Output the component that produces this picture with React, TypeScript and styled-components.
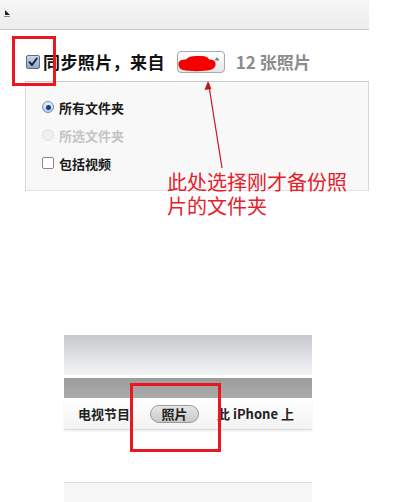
import React from "react";
import styled, { createGlobalStyle } from "styled-components";

const Global = createGlobalStyle`
  html, body { margin: 0; padding: 0; background: #ffffff; }
  body { font-family: "Noto Sans CJK SC", "Liberation Sans", sans-serif; }
  * { box-sizing: border-box; }
`;

const Page = styled.div`
  position: relative;
  width: 400px;
  height: 502px;
  overflow: hidden;
  background: #ffffff;
`;

const TopBar = styled.div`
  width: 369px;
  height: 30px;
  background: linear-gradient(#f6f6f6, #ececec);
  border-bottom: 1px solid #c9c9c9;
  display: flex;
  align-items: flex-start;
  padding: 9px 0 0 4px;
`;

const HeaderRow = styled.div`
  margin-top: 21px;
  height: 22px;
  display: flex;
  align-items: center;
  padding-left: 26px;
`;

const CheckedBox = styled.span`
  width: 14px;
  height: 14px;
  border: 1px solid #5d6f86;
  border-radius: 2px;
  background: linear-gradient(#c9d8ea, #8fa8c6);
  display: inline-flex;
  align-items: center;
  justify-content: center;
  margin-right: 3px;
`;

const Title = styled.span`
  font-size: 17px;
  font-weight: 700;
  color: #111;
  letter-spacing: 0.4px;
  line-height: 22px;
`;

const Popup = styled.span`
  position: relative;
  margin-left: 12px;
  width: 48px;
  height: 22px;
  border: 1px solid #a9a9a9;
  border-radius: 4px;
  background: linear-gradient(#ffffff, #e6e6e6);
  display: inline-flex;
  align-items: center;
`;

const PopupArt = styled.svg`
  position: absolute;
  left: -1px;
  top: -1px;
`;

const Count = styled.span`
  margin-left: 11px;
  font-size: 17px;
  font-weight: 700;
  color: #8c8c8c;
  line-height: 22px;
`;

const Panel = styled.div`
  margin: 8px 0 0 25px;
  width: 344px;
  height: 110px;
  background: #f8f8f8;
  border: 1px solid #d6d6d6;
  border-top-color: #c8c8c8;
  border-bottom-color: #e2e2e2;
  padding: 11px 0 0 16px;
  display: flex;
  flex-direction: column;
`;

const OptionRow = styled.div<{ $disabled?: boolean }>`
  height: 28px;
  display: flex;
  align-items: center;
  gap: 5px;
  font-size: 13px;
  font-weight: 700;
  color: ${(p) => (p.$disabled ? "#c4c4c4" : "#1a1a1a")};
`;

const Radio = styled.span<{ $on?: boolean; $disabled?: boolean }>`
  width: 12px;
  height: 12px;
  border-radius: 50%;
  border: 1px solid ${(p) => (p.$disabled ? "#e2e2e2" : "#6f8fb8")};
  background: ${(p) =>
    p.$disabled ? "#f0f0f0" : "linear-gradient(#e8f0fa, #b8cce6)"};
  display: inline-flex;
  align-items: center;
  justify-content: center;
  &::after {
    content: "";
    display: ${(p) => (p.$on ? "block" : "none")};
    width: 5px;
    height: 5px;
    border-radius: 50%;
    background: #1f3f73;
  }
`;

const EmptyBox = styled.span`
  width: 12px;
  height: 12px;
  border: 1px solid #8a8a8a;
  border-radius: 2px;
  background: #ffffff;
`;

const Lower = styled.div`
  margin: 144px 0 0 64px;
  width: 248px;
  display: flex;
  flex-direction: column;
`;

const Toolbar = styled.div`
  height: 40px;
  background: linear-gradient(#c6c8cc, #dadcdf 45%, #eceef1 85%, #f2f3f5);
`;

const Gap = styled.div<{ $h: number; $bg: string }>`
  height: ${(p) => p.$h}px;
  background: ${(p) => p.$bg};
`;

const Band = styled.div`
  height: 20px;
  background: linear-gradient(#9c9c9c, #ababab);
`;

const TabBar = styled.div`
  height: 32px;
  background: linear-gradient(#ffffff, #f3f3f3);
  border-bottom: 1px solid #dcdcdc;
  box-shadow: 0 1px 2px rgba(0, 0, 0, 0.08);
  display: flex;
  align-items: center;
  padding-left: 14px;
  font-size: 13px;
  font-weight: 700;
  color: #222;
`;

const Tab = styled.span`
  line-height: 18px;
`;

const Pill = styled.span`
  margin-left: 20px;
  width: 49px;
  height: 18px;
  border-radius: 9px;
  border: 1px solid #9a9a9a;
  background: linear-gradient(#e6e6e6, #c9c9c9);
  display: inline-flex;
  align-items: center;
  justify-content: center;
  line-height: 16px;
`;

const TabPlain = styled.span`
  margin-left: 18px;
  line-height: 18px;
`;

const BottomStrip = styled.div`
  margin-top: 52px;
  height: 20px;
  border-top: 1px solid #dedede;
  background: #f6f6f6;
`;

const RedBox = styled.div<{ $x: number; $y: number; $w: number; $h: number }>`
  position: absolute;
  left: ${(p) => p.$x}px;
  top: ${(p) => p.$y}px;
  width: ${(p) => p.$w}px;
  height: ${(p) => p.$h}px;
  border: 3px solid #ea1620;
`;

const Note = styled.div`
  position: absolute;
  left: 167px;
  top: 170px;
  width: 190px;
  display: flex;
  flex-direction: column;
  font-size: 20px;
  font-weight: 400;
  color: #e4202a;
`;

const NoteLine = styled.span`
  height: 24px;
  line-height: 24px;
  white-space: nowrap;
`;

const ArrowSvg = styled.svg`
  position: absolute;
  left: 200px;
  top: 78px;
`;

export default function App() {
  return (
    <Page>
      <Global />
      <TopBar>
        <svg width="7" height="8" viewBox="0 0 7 8">
          <path d="M1 1 L1 6 L6 6 Z" fill="#222" />
          <path d="M0 7.5 H6" stroke="#888" strokeWidth="1" />
        </svg>
      </TopBar>
      <HeaderRow>
        <CheckedBox>
          <svg width="10" height="10" viewBox="0 0 10 10">
            <path
              d="M1.5 5.2 L4 8 L8.8 1.5"
              fill="none"
              stroke="#15263f"
              strokeWidth="2"
              strokeLinecap="round"
              strokeLinejoin="round"
            />
          </svg>
        </CheckedBox>
        <Title>同步照片，来自</Title>
        <Popup>
          <PopupArt width="48" height="22" viewBox="0 0 48 22">
            <path
              d="M1.5 12 C2 9.5 5 8.5 9 8.5 C11 5.5 16 4.5 22 5 C28 4.5 31 6 32 8.5 C36 8.5 38.5 10 38.5 12.5 C39 15.5 37 18 33 19 C26 20.5 13 20.5 6 19 C2.5 18 1 15 1.5 12 Z"
              fill="#f40000"
            />
            <path d="M40 6 L42.5 9.5 H37.5 Z" fill="#7a7a7a" />
          </PopupArt>
        </Popup>
        <Count>12 张照片</Count>
      </HeaderRow>
      <Panel>
        <OptionRow>
          <Radio $on />
          所有文件夹
        </OptionRow>
        <OptionRow $disabled>
          <Radio $disabled />
          所选文件夹
        </OptionRow>
        <OptionRow>
          <EmptyBox />
          包括视频
        </OptionRow>
      </Panel>
      <Lower>
        <Toolbar />
        <Gap $h={3} $bg="#ffffff" />
        <Band />
        <TabBar>
          <Tab>电视节目</Tab>
          <Pill>照片</Pill>
          <TabPlain>此 iPhone 上</TabPlain>
        </TabBar>
        <BottomStrip />
      </Lower>

      <RedBox $x={12} $y={36} $w={44} $h={50} />
      <RedBox $x={130} $y={383} $w={91} $h={69} />
      <ArrowSvg width="30" height="95" viewBox="0 0 30 95">
        <path d="M22 90 L8.5 5" stroke="#c8141c" strokeWidth="1.2" fill="none" />
        <path d="M8 3 L4.5 12 L11.5 11 Z" fill="#c8141c" />
      </ArrowSvg>
      <Note>
        <NoteLine>此处选择刚才备份照</NoteLine>
        <NoteLine>片的文件夹</NoteLine>
      </Note>
    </Page>
  );
}
